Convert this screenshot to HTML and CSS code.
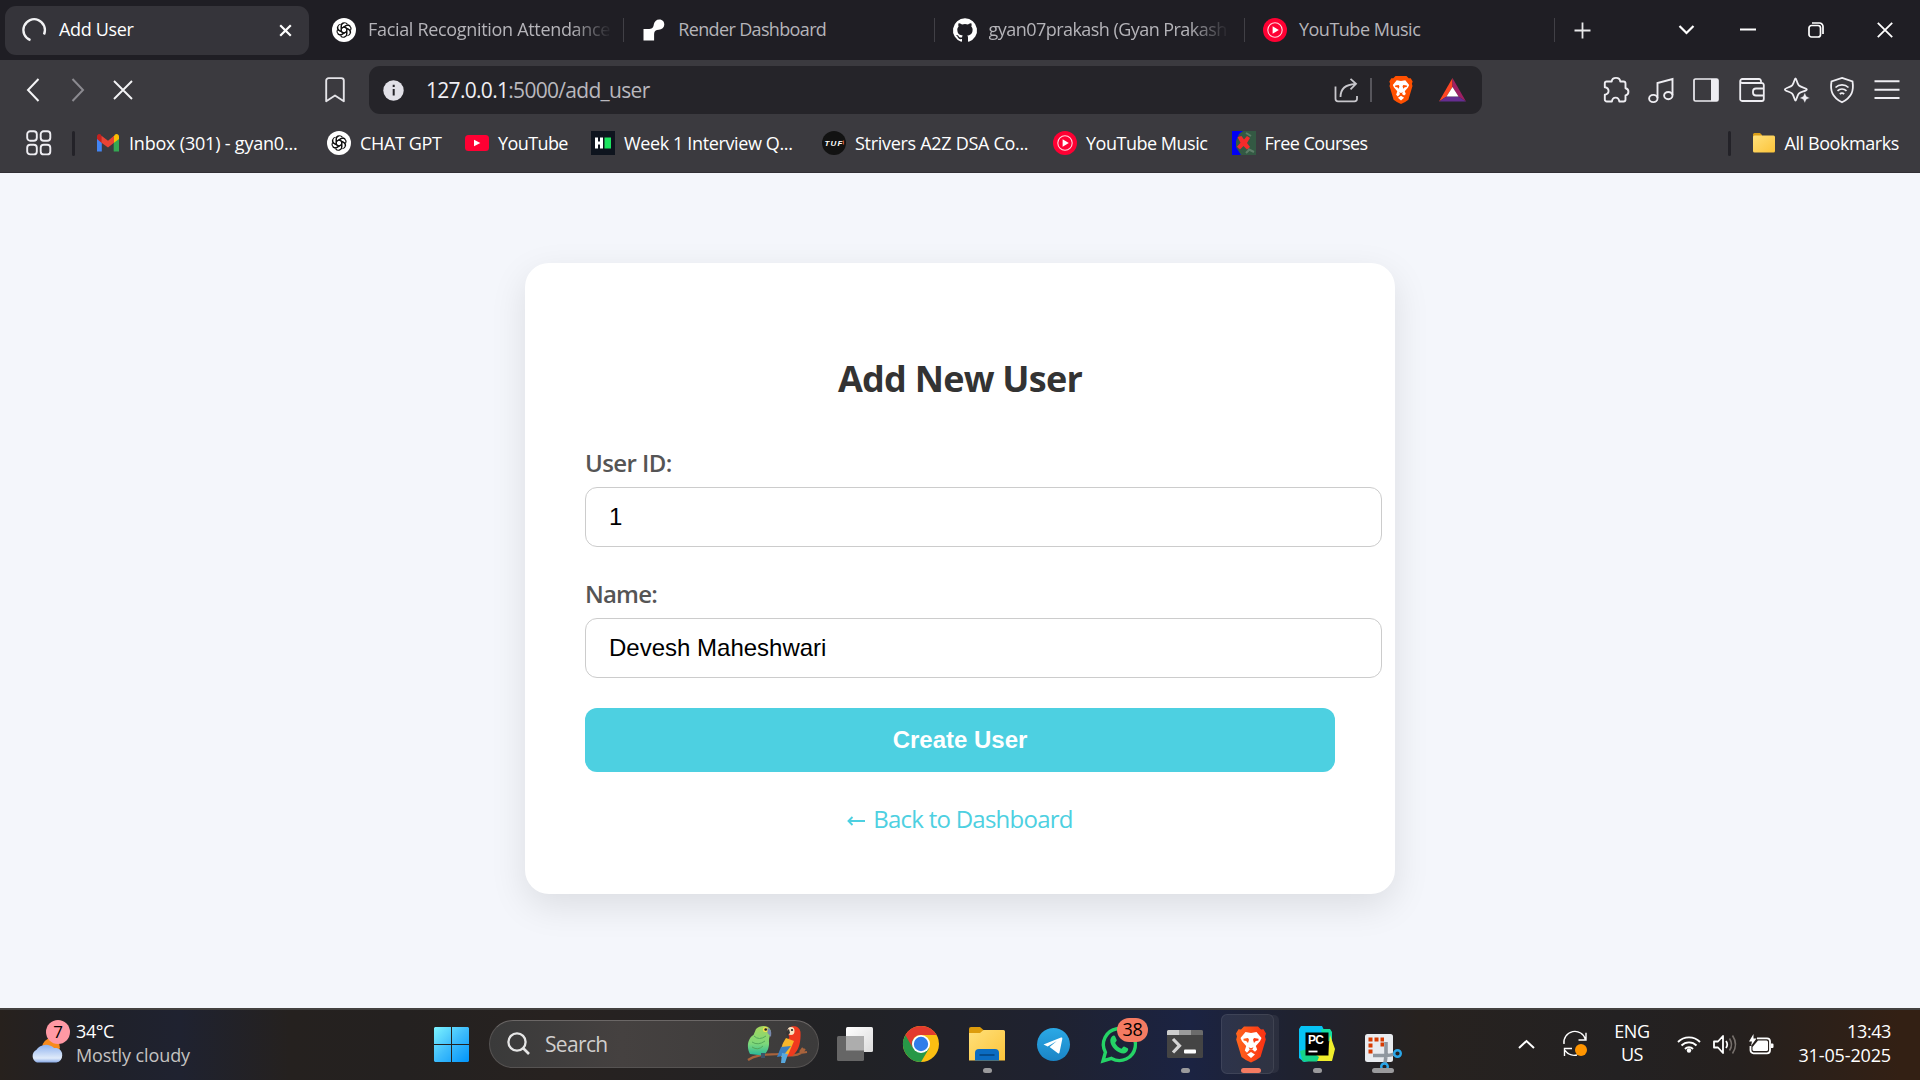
FILE: index.html
```html
<!DOCTYPE html>
<html lang="en">
<head>
<meta charset="utf-8">
<title>Add User</title>
<link rel="stylesheet" href="styles.css">
</head>
<body>
<svg class="defs" aria-hidden="true">
  <defs>
    <linearGradient id="win" x1="0" y1="0" x2="1" y2="1"><stop offset="0" stop-color="#7df4ff"/><stop offset=".5" stop-color="#3ebcfb"/><stop offset="1" stop-color="#0094fb"/></linearGradient>
    <linearGradient id="folder" x1="0" y1="0" x2="1" y2="1"><stop offset="0" stop-color="#ffe07a"/><stop offset="1" stop-color="#fcc43a"/></linearGradient>
    <linearGradient id="cloud" x1="0" y1="0" x2="0" y2="1"><stop offset="0" stop-color="#8fb2ee"/><stop offset=".75" stop-color="#e0ebfa"/><stop offset="1" stop-color="#88a9e6"/></linearGradient>
    <linearGradient id="tg" x1="0" y1="0" x2="0" y2="1"><stop offset="0" stop-color="#2ba9e6"/><stop offset="1" stop-color="#1a84c5"/></linearGradient>
    <linearGradient id="brave" x1="0" y1="0" x2="1" y2="0"><stop offset="0" stop-color="#ff5a0a"/><stop offset="1" stop-color="#fb1f00"/></linearGradient>
    <linearGradient id="green" x1="0" y1="0" x2="0" y2="1"><stop offset="0" stop-color="#a5d65c"/><stop offset=".6" stop-color="#7ed87a"/><stop offset="1" stop-color="#27b79a"/></linearGradient>
    <symbol id="gpt" viewBox="0 0 24 24">
      <circle cx="12" cy="12" r="12" fill="#fff"/>
      <g fill="none" stroke="#111" stroke-width="1.15">
        <path id="petal" d="M9.3 13.4V8.1a3.3 3.3 0 0 1 6-1.9M9.3 10.4l4.8-2.8a3.3 3.3 0 0 1 3.9.4"/>
        <use href="#petal" transform="rotate(60 12 12)"/><use href="#petal" transform="rotate(120 12 12)"/><use href="#petal" transform="rotate(180 12 12)"/><use href="#petal" transform="rotate(240 12 12)"/><use href="#petal" transform="rotate(300 12 12)"/>
      </g>
    </symbol>
    <symbol id="ytm" viewBox="0 0 24 24"><circle cx="12" cy="12" r="12" fill="#ff0033"/><circle cx="12" cy="12" r="7.2" fill="none" stroke="#fff" stroke-opacity=".85" stroke-width="1.1"/><path d="M9.6 8.3v7.4l6.2-3.7z" fill="#fff"/></symbol>
    <symbol id="lion" viewBox="0 0 30 36">
      <path d="M8 0h14l3 3 2.500-.2L30 7l-1 3 .8 3-5.300 17.500Q19.500 34.500 15 36q-4.500-1.500-9.500-5.500L.2 13 1 10 0 7l2.500-4.200L5 3z"/>
      <path fill="#fff" d="M9.500 5.500 15 6.500l5.500-1 5 6-1.500 3.200-4.200 4.800 1.400 3.500-2.200 2.200-2.800-2.200h-2.400L11 26.200 8.800 24l1.400-4.500L6 14.700 4.500 11.500zM15 25.500l4 2.500-4 3.500-4-3.500z"/>
      <path d="M7.500 12.200 12 11.600l1 1.700-1 3.200-1.800-1.900-2.700-.5zM22.500 12.200 18 11.600l-1 1.700 1 3.200 1.800-1.900 2.700-.5zM12.500 20.800l2.500 1 2.500-1-1.300 2.200h-2.400z"/>
    </symbol>
  </defs>
</svg>

<header class="browser">
  <div class="tabstrip">
    <div class="tab tab-active">
      <svg class="ic24 spinner" viewBox="0 0 24 24"><path d="M8.500 22.200A10.800 10.800 0 1 1 22 16.500" fill="none" stroke="#f2f2f4" stroke-width="2.300"/></svg>
      <span class="tab-title t-add">Add User</span>
      <svg class="close" width="13" height="13" viewBox="0 0 13 13"><path d="M1.200 1.200l10.600 10.600M11.800 1.200 1.200 11.800" stroke="#fff" stroke-width="2.200"/></svg>
    </div>
    <div class="tab"><svg class="ic24"><use href="#gpt"/></svg><span class="tab-title fade t-facial">Facial Recognition Attendance</span></div>
    <div class="tab">
      <svg class="ic24" viewBox="0 0 24 24"><path d="M1.500 11h5.800c3.600 0 4.200-2.200 4.500-4.400A5.500 5.500 0 0 1 17.400 1.500c3.200 0 5 2.400 4.900 5.200-.2 3-2.400 4.900-5.500 5-2.700 0-4.700 1.200-4.700 4.300v6.500H1.500z" fill="#fff"/></svg>
      <span class="tab-title t-render">Render Dashboard</span>
    </div>
    <div class="tab">
      <svg class="ic24" viewBox="0 0 24 24"><path fill="#fff" d="M12 .3a12 12 0 0 0-3.800 23.400c.6.100.8-.3.800-.6v-2c-3.300.7-4-1.600-4-1.600-.6-1.400-1.400-1.800-1.400-1.800-1-.7.100-.7.100-.7 1.200 0 1.900 1.200 1.900 1.200 1 1.800 2.800 1.300 3.500 1 0-.8.400-1.300.7-1.600-2.700-.3-5.500-1.300-5.500-6 0-1.200.5-2.300 1.300-3.100-.2-.4-.6-1.600 0-3.200 0 0 1-.3 3.400 1.200a11.500 11.500 0 0 1 6 0c2.300-1.500 3.300-1.200 3.300-1.200.6 1.600.2 2.800 0 3.200.9.800 1.300 1.900 1.300 3.200 0 4.600-2.800 5.600-5.500 5.900.5.400.9 1 .9 2.200v3.300c0 .3.100.7.800.6A12 12 0 0 0 12 .3"/></svg>
      <span class="tab-title fade t-gyan">gyan07prakash (Gyan Prakash</span>
    </div>
    <div class="tab"><svg class="ic24"><use href="#ytm"/></svg><span class="tab-title t-music">YouTube Music</span></div>
    <svg class="newtab" width="17" height="17" viewBox="0 0 17 17"><path d="M8.500.5v16M.5 8.500h16" stroke="#e8e8ea" stroke-width="1.800"/></svg>
    <div class="winctl">
      <svg class="tabsearch" width="17" height="12" viewBox="0 0 17 12"><path d="M1.500 2l7 7 7-7" fill="none" stroke="#fff" stroke-width="2.200"/></svg>
      <svg width="16" height="4" viewBox="0 0 16 4"><path d="M0 1.500h16" stroke="#fff" stroke-width="2"/></svg>
      <svg width="16" height="16" viewBox="0 0 16 16"><rect x="1" y="3.500" width="11.500" height="11.500" rx="2.500" fill="none" stroke="#fff" stroke-width="1.700"/><path d="M4 1h7.500A3.500 3.500 0 0 1 15 4.500V12" fill="none" stroke="#fff" stroke-width="1.700"/></svg>
      <svg width="16" height="16" viewBox="0 0 16 16"><path d="M.8.8l14.400 14.400M15.200.8.8 15.200" stroke="#fff" stroke-width="1.800"/></svg>
    </div>
  </div>

  <div class="toolbar">
    <svg class="back" width="14" height="24" viewBox="0 0 14 24"><path d="M12.500 1 2 12l10.500 11" fill="none" stroke="#f4f4f6" stroke-width="2"/></svg>
    <svg class="fwd" width="14" height="24" viewBox="0 0 14 24"><path d="M1.500 1 12 12 1.500 23" fill="none" stroke="#8b8a90" stroke-width="2"/></svg>
    <svg class="stop" width="20" height="20" viewBox="0 0 20 20"><path d="M1 1l18 18M19 1 1 19" stroke="#f4f4f6" stroke-width="1.900"/></svg>
    <svg class="mark" width="20" height="26" viewBox="0 0 20 26"><path d="M1.200 24.300V3.600a2.500 2.500 0 0 1 2.500-2.500h12.600a2.500 2.500 0 0 1 2.500 2.500v20.700L10 18.500z" fill="none" stroke="#e4e3e8" stroke-width="1.900" stroke-linejoin="round"/></svg>
    <div class="urlbar">
      <svg class="info" width="21" height="21" viewBox="0 0 21 21"><circle cx="10.500" cy="10.500" r="10.200" fill="#e2e1e8"/><path d="M10.700 9v6.500M10.700 4.800v2.300" stroke="#252429" stroke-width="2"/></svg>
      <span class="url">127.0.0.1<span class="dim">:5000/add_user</span></span>
      <svg class="share" width="25" height="25" viewBox="0 0 25 25"><path d="M1.500 8.500v12.300a2.500 2.500 0 0 0 2.500 2.500h16.500a2.500 2.500 0 0 0 2.500-2.500V18M6.500 19c0-7.500 4.500-12.500 15-13M16.500.9 22 5.900l-5.500 5.500" fill="none" stroke="#c8c7cc" stroke-width="1.800"/></svg>
      <i class="urlsep"></i>
      <svg class="shield" width="24" height="28" fill="#ff5000"><use href="#lion"/></svg>
      <svg class="bat" width="27" height="24" viewBox="0 0 27 24"><path d="M13.500 0v9L7.500 18.500 0 23.500z" fill="#ff4724"/><path d="M13.500 0 27 23.500l-7.500-5-6-9.500z" fill="#9e1f63"/><path d="M0 23.500l7.500-5h12l7.500 5z" fill="#662d91"/><path d="M13.500 9l6 9.500h-12z" fill="#fff"/></svg>
    </div>
    <div class="tools">
      <svg viewBox="0 0 26 26"><path d="M3.500 4.500h5.200c.5-4.800 8.100-4.800 8.600 0h3.200a2 2 0 0 1 2 2v4.700c3.900.8 3.900 6.400 0 7.200v4.100a2 2 0 0 1-2 2h-4.200c-.6-5.200-6.800-5.200-7.400 0H3.800a2 2 0 0 1-2-2v-4.800c5-.8 5-6.600 0-7.400V6.200a1.700 1.700 0 0 1 1.700-1.700z" fill="none" stroke="#eeedf2" stroke-width="1.900" stroke-linejoin="round"/></svg>
      <svg viewBox="0 0 26 26"><path d="M9.500 21V6l15-4v16" fill="none" stroke="#eeedf2" stroke-width="1.900"/><ellipse cx="5.300" cy="21.500" rx="4.200" ry="3.600" fill="none" stroke="#eeedf2" stroke-width="1.900"/><ellipse cx="20.300" cy="18.600" rx="4.200" ry="3.600" fill="none" stroke="#eeedf2" stroke-width="1.900"/></svg>
      <svg viewBox="0 0 26 26"><rect x="1" y="2" width="24" height="22" rx="1.500" fill="none" stroke="#eeedf2" stroke-width="1.700"/><path d="M18 2h7v22h-7z" fill="#eeedf2"/></svg>
      <svg viewBox="0 0 26 26"><path d="M22 6V4a2 2 0 0 0-2-2H3.500A2.200 2.200 0 0 0 1.200 4.200v17.300A2 2 0 0 0 3.200 24h19.600a2 2 0 0 0 2-2V8a2 2 0 0 0-2-2H3.500A2 2 0 0 1 1.300 4M25 11.500h-8a3 3 0 0 0-3 3v1a3 3 0 0 0 3 3h8" fill="none" stroke="#eeedf2" stroke-width="1.800"/></svg>
      <svg viewBox="0 0 26 26"><path d="M11.500 1.500c1 0 1.500 5 3.300 6.900 1.900 2 8 2.500 8 4.100s-6.100 2.100-8 4.100c-1.800 1.900-2.300 7-3.300 7s-1.500-5.100-3.300-7C6.300 14.600.9 14.100.9 12.500s5.400-2.100 7.300-4.100c1.800-1.900 2.300-6.900 3.300-6.900z" fill="none" stroke="#eeedf2" stroke-width="1.800"/><path d="M20.800 15.500l1.600 3.800 3.400 1.600-3.400 1.600-1.600 3.500-1.600-3.500-3.600-1.600 3.600-1.600z" fill="#eeedf2" stroke="#3b3a3f" stroke-width=".4"/></svg>
      <svg viewBox="0 0 26 26"><path d="M13 .9 23.500 4.500c1.500 9-.5 15.500-10.500 20.800C3 20 1 13.500 2.500 4.500z" fill="none" stroke="#eeedf2" stroke-width="1.800"/><path d="M6.500 10.500a9.500 9.500 0 0 1 13 0M8.500 13.800a6.500 6.500 0 0 1 9 0M10.800 17a3.300 3.300 0 0 1 4.400 0" fill="none" stroke="#eeedf2" stroke-width="1.700"/></svg>
      <svg viewBox="0 0 26 26"><path d="M.5 4.200h25M.5 12.700h25M.5 21h25" stroke="#eeedf2" stroke-width="2"/></svg>
    </div>
  </div>

  <div class="bookmarks">
    <svg class="apps" width="26" height="26" viewBox="0 0 26 26"><g fill="none" stroke="#eeedf2" stroke-width="1.900"><rect x="1.200" y="1.200" width="9.600" height="9.600" rx="3"/><rect x="14.700" y="1.200" width="9.600" height="9.600" rx="3"/><rect x="1.200" y="14.800" width="9.600" height="9.600" rx="3"/><rect x="14.700" y="14.800" width="9.600" height="9.600" rx="3"/></g></svg>
    <i class="bsep"></i>
    <nav class="bm-list">
      <span class="bm"><svg class="ic24" viewBox="0 0 24 24"><path d="M1 5.500v15h4.800v-9z" fill="#4285f4"/><path d="M17.700 11.500v9H23v-15z" fill="#34a853"/><path d="M17.700 5.500v6.500L23 8V5.500c0-2.500-2.500-3.200-4-2z" fill="#fbbc04"/><path d="M5.800 5.500v6.500L1 8V5.500c0-2.500 2.300-3.200 3.800-2z" fill="#c5221f"/><path d="M5.500 4.800 12 9.700l6-4.900v7L12 16.500l-6.500-4.800z" fill="#ea4335"/></svg><span class="b-inbox">Inbox (301) - gyan0...</span></span>
      <span class="bm"><svg class="ic24"><use href="#gpt"/></svg><span class="b-gpt">CHAT GPT</span></span>
      <span class="bm"><svg class="ic24" viewBox="0 0 24 24"><rect y="4" width="24" height="16" rx="3.500" fill="#ff0033"/><path d="M9 8.800v6.400l6.300-3.200z" fill="#fff"/></svg><span class="b-yt">YouTube</span></span>
      <span class="bm"><svg class="ic24" viewBox="0 0 24 24"><rect width="24" height="24" fill="#0e141e"/><path d="M4 6.500h3v4h2v-4h3v11H9v-4H7v4H4z" fill="#fff"/><path d="M13.500 6.500h6.500v11h-6.500z" fill="#1ce45f"/></svg><span class="b-week">Week 1 Interview Q...</span></span>
      <span class="bm"><svg class="ic24" viewBox="0 0 24 24"><circle cx="12" cy="12" r="12" fill="#121212"/><text x="2.500" y="14.800" class="tuf" textLength="18">TUF</text><path d="M21.500 9.500v4" stroke="#c8502c" stroke-width="1.200"/></svg><span class="b-striv">Strivers A2Z DSA Co...</span></span>
      <span class="bm"><svg class="ic24"><use href="#ytm"/></svg><span class="t-music">YouTube Music</span></span>
      <span class="bm"><svg class="ic24" viewBox="0 0 24 24"><rect width="24" height="24" fill="#335943"/><path d="M0 0h11L7 3 4 10v6l5 8H0z" fill="#0000f5"/><path d="M14 2l5 3M16 18l6 3M14 22l3-3" stroke="#5d7d68" stroke-width="2"/><path d="M5.500 6l4-1 2.500 3.500L15 5l3 2-3 5 3 4-3 2.500-3.500-3.500L8 18.500l-3-2.800 3.500-4z" fill="#f52b2b"/></svg><span class="b-free">Free Courses</span></span>
    </nav>
    <i class="bsep bsep-r"></i>
    <span class="bm bm-all"><svg class="ic24" viewBox="0 0 24 24"><path d="M1 3.500a1.500 1.500 0 0 1 1.500-1.500h5.500l2 2v6H1z" fill="#d99d18"/><rect x="1" y="4.500" width="22" height="17" rx="1.500" fill="url(#folder)"/></svg><span class="b-all">All Bookmarks</span></span>
  </div>
</header>

<main class="page">
  <form class="card">
    <h2>Add New User</h2>
    <label class="l-id" for="uid">User ID:</label>
    <input id="uid" type="text" value="1">
    <label class="l-name" for="name">Name:</label>
    <input id="name" type="text" value="Devesh Maheshwari">
    <button type="button">Create User</button>
    <a class="link" href="#"><svg width="18" height="10" viewBox="0 0 18 10"><path d="M18 5H1.500M5.500 1 1.500 5l4 4" fill="none" stroke="#4dd0e1" stroke-width="1.900"/></svg><span>Back to Dashboard</span></a>
  </form>
</main>

<footer class="taskbar">
  <div class="weather">
    <div class="w-icon">
      <svg width="42" height="44" viewBox="0 0 42 44"><circle cx="25" cy="25" r="10" fill="#f78a1c"/><path d="M9 43a8 8 0 0 1-.5-14.500 12 10 0 0 1 20-2 10 10 0 0 1 3 0A8.500 8.500 0 0 1 31 43z" transform="translate(0 -.5)" fill="url(#cloud)"/></svg>
      <span class="badge badge-pink">7</span>
    </div>
    <div class="w-text"><span class="w-temp">34°C</span><span class="w-desc">Mostly cloudy</span></div>
  </div>
  <svg class="start" width="35" height="35" viewBox="0 0 35 35"><path d="M1 0h16v17H0V1zM18 0h16l1 1v16H18zM0 18h17v17H1l-1-1zM18 18h17v16l-1 1H18z" fill="url(#win)"/></svg>
  <div class="search">
    <svg width="24" height="24" viewBox="0 0 24 24"><circle cx="10" cy="10" r="8.600" fill="none" stroke="#e6e6e6" stroke-width="2.300"/><path d="M16 16l6 6" stroke="#e6e6e6" stroke-width="2.600"/></svg>
    <span class="s-text">Search</span>
    <svg class="birds" width="61" height="38" viewBox="0 0 61 38">
      <path d="M1 35c8-6 20-5 31-6 9 1 16 3 22-1l4-4M53 28l7-1M53 27l3-4" fill="none" stroke="#a8633c" stroke-width="2.200"/>
      <path d="M9 4C13-.5 22 0 23.500 5c.5 5-2 8-1.500 12 .4 6-2 11-6 13.500L3 29C-1 22 1 13 6.500 10z" fill="url(#green)"/>
      <path d="M7 11q5 5 12 0M5 17q6 4 13-1M5 22q6 4 11-1" stroke="#55a85b" fill="none" stroke-width="1"/>
      <circle cx="18.500" cy="4.500" r="2.600" fill="#f0e04c"/><circle cx="18.700" cy="4.500" r="1.300" fill="#222"/>
      <path d="M20.500 3q5 1 3.500 9l-3.500-4z" fill="#7889ad"/><path d="M14 28h4v5h-4z" fill="#3d5468"/>
      <path d="M40 7c1-7 12-8 13.500 0 .5 9-1 18-8 24l-8 1c-3-11 2-14 5-20z" fill="#f03a1e"/>
      <path d="M39 13l8 3-6 14-7 2c-.5-9 1-13 5-19z" fill="#f8b62a"/>
      <path d="M34 22l10-1-8 10-6 1z" fill="#3c7fc0"/><path d="M35 28l6 1-3 9h-4z" fill="#58a8dd"/>
      <ellipse cx="44" cy="6" rx="3.500" ry="4" fill="#f7e3c0"/><circle cx="45" cy="5" r="1.100" fill="#222"/><path d="M42 4q-4 2-2 7l3-3z" fill="#343434"/>
    </svg>
  </div>
  <div class="apps-row">
    <div class="app"><svg width="36" height="34" viewBox="0 0 36 34"><defs><linearGradient id="tv" x1="0" y1="0" x2="1" y2="1"><stop offset="0" stop-color="#fff"/><stop offset="1" stop-color="#dcdcdc"/></linearGradient></defs><rect x="9" width="27" height="25" rx="1.500" fill="url(#tv)"/><rect y="9" width="27" height="25" rx="1.500" fill="#666"/><path d="M9 9h18v14.500H9z" fill="#adadad"/></svg></div>
    <div class="app"><svg width="36" height="36" viewBox="0 0 36 36"><circle cx="18" cy="18" r="18" fill="#fbbf12"/><path d="M18 18 2.400 9A18 18 0 0 0 18 36l8-13.500z" fill="#279847"/><path d="M2.400 9a18 18 0 0 1 31.200 0H18a9 9 0 0 0-8 13.500z" fill="#e33b2e"/><circle cx="18" cy="18" r="9" fill="#fff"/><circle cx="18" cy="18" r="7.200" fill="#2f7de9"/></svg></div>
    <div class="app dot"><svg width="36" height="34" viewBox="0 0 36 34"><path d="M0 2a2 2 0 0 1 2-2h9l3.500 3v6H0z" fill="#dd9c0c"/><path d="M0 6h11l3.500-3H34.500a1.500 1.500 0 0 1 1.500 1.500V33.500H0z" fill="url(#folder)"/><path d="M6 33.500V26a4 4 0 0 1 4-4h16a4 4 0 0 1 4 4v7.500z" fill="#0b6cc2"/><path d="M10.500 28h15" stroke="#05457f" stroke-width="1.600"/></svg></div>
    <div class="app"><svg width="33" height="33" viewBox="0 0 33 33"><circle cx="16.500" cy="16.500" r="16.500" fill="url(#tg)"/><path d="M6.500 16.500 24 9.600c.9-.3 1.500.2 1.300 1.300L22.500 24.500c-.2 1-.8 1.200-1.600.7l-8.300-6.100 7.200-6.200-9.100 5.500z" fill="#fff"/></svg></div>
    <div class="app"><svg width="37" height="37" viewBox="0 0 37 37"><path d="M2 35l2.400-8.800A16 16 0 1 1 10.500 32.400z" fill="none" stroke="#25d366" stroke-width="3.400"/><path d="M11 10.500c1.500-1.500 2.800-1 3.300.2l1.400 3.400c.3.900-1.200 2.300-1.500 2.900 1.200 2.600 3.300 4.600 6.200 5.700.8-.3 1.900-2.600 2.800-2.200l3.500 1.800c1.600 1-.8 5.200-4 5.200C16.500 27.500 9 20.500 9.300 14.500c.1-1.700.8-3.100 1.700-4z" fill="#25d366"/></svg><span class="badge badge-coral">38</span></div>
    <div class="app dot"><svg width="36" height="28" viewBox="0 0 36 28"><rect width="36" height="28" rx="1.500" fill="#444"/><path d="M0 5V1.500A1.500 1.500 0 0 1 1.500 0H12v5z" fill="#cdcdcd"/><path d="M12 0h12v5H12z" fill="#9b9b9b"/><path d="M24 0h10.500A1.500 1.500 0 0 1 36 1.500V5H24z" fill="#6b6b6b"/><path d="M6 9l6.500 6.700L6 22.500" fill="none" stroke="#d4d4d4" stroke-width="3.200"/><rect x="17" y="19.500" width="12" height="4" rx="1" fill="#fff"/></svg></div>
    <div class="app app-active"><svg width="30" height="37" fill="url(#brave)"><use href="#lion"/></svg></div>
    <div class="app dot"><svg width="36" height="36" viewBox="0 0 36 36"><path d="M0 3l2-3h21l2 4-1 28-19 4-5-4z" fill="#06c3f5"/><path d="M22 3h9l2 3v8l-9 3z" fill="#14dfa4"/><path d="M31 9l5 14-3 12H9l-4-5 24-3z" fill="#f0ee2c"/><path d="M1 25l7-2 12 8-2 4.500H3.500z" fill="#16d389"/><rect x="6.500" y="6.500" width="23" height="23" fill="#000"/><text x="9" y="18.300" class="pc" textLength="16">PC</text><path d="M9.500 25.500h9" stroke="#fff" stroke-width="1.800"/></svg></div>
    <div class="app wide"><svg class="snip" width="37" height="37" viewBox="0 0 37 37"><rect width="28" height="28" rx="2.500" fill="#e9ecf0"/><path d="M3.500 3.500h4v4h-4zM9.500 3.500h4v4h-4zM15.500 3.500h3.500v4h-3.500zM3.500 9.500h4v4h-4zM3.500 15.500h4v4h-4zM15.500 8.500H19v4h-3.500z" fill="#d83b01"/><path d="M8 21.500h12q6 0 9-1.500M21 8v14l-1 7" stroke="#8f979f" stroke-width="3.600" fill="none"/><circle cx="32.500" cy="19.500" r="3.300" fill="none" stroke="#2aa7ea" stroke-width="2.400"/><circle cx="19.500" cy="32.800" r="3.300" fill="none" stroke="#2aa7ea" stroke-width="2.400"/></svg></div>
  </div>
  <div class="tray">
    <svg class="up" width="17" height="10" viewBox="0 0 17 10"><path d="M1 9l7.500-7L16 9" fill="none" stroke="#fff" stroke-width="2"/></svg>
    <svg class="sync" width="25" height="25" viewBox="0 0 25 25"><path d="M1 12A11 11 0 0 1 22.500 7.500M23 .8V8h-7.500M1.500 24v-7.500h7.500M2 18.500c3 4 8 5.500 12 4.500" fill="none" stroke="#fff" stroke-width="1.400"/><circle cx="18" cy="18" r="6" fill="#ff9500"/></svg>
    <div class="lang"><span>ENG</span><span>US</span></div>
    <svg class="wifi" width="24" height="18" viewBox="0 0 24 18"><path d="M1 7a15.500 15.500 0 0 1 22 0M4.500 10.500a10.500 10.500 0 0 1 15 0M8 14a5.500 5.500 0 0 1 8 0" fill="none" stroke="#fff" stroke-width="1.900"/><circle cx="12" cy="15.500" r="2.200" fill="#fff"/></svg>
    <svg class="vol" width="24" height="21" viewBox="0 0 24 21"><path d="M1 7.500h4l5-5.500v17l-5-5.500H1z" fill="none" stroke="#fff" stroke-width="1.800" stroke-linejoin="round"/><path d="M13 7q2.500 3.500 0 7" fill="none" stroke="#fff" stroke-width="1.700"/><path d="M16.500 4.500q4 6 0 12M19.500 1.500q6 9 0 18" fill="none" stroke="#77706c" stroke-width="1.600"/></svg>
    <svg class="batt" width="25" height="21" viewBox="0 0 25 21"><path d="M8 4.300h10a3 3 0 0 1 3 3v9a3 3 0 0 1-3 3H4.500a3 3 0 0 1-3-3V12" fill="none" stroke="#fff" stroke-width="1.800"/><path d="M9 6.500h8.500a1.500 1.500 0 0 1 1.500 1.500v7.500a1.500 1.500 0 0 1-1.500 1.500H5a1.500 1.500 0 0 1-1.500-1.500V13z" fill="#fff"/><path d="M22 9.500h1.500a1 1 0 0 1 1 1v2.500a1 1 0 0 1-1 1H22zM4.500 0 0 7.500h3L2 12l5.500-7.500h-3z" fill="#fff"/></svg>
    <div class="clock"><span class="t-time">13:43</span><span class="t-date">31-05-2025</span></div>
  </div>
</footer>
</body>
</html>
```
FILE: styles.css
```css
* { box-sizing: border-box; }
body {
  margin: 0;
  width: 1920px;
  height: 1080px;
  overflow: hidden;
  display: flex;
  flex-direction: column;
  font-family: "Open Sans", "Noto Sans", sans-serif;
  font-size: 18px;
  white-space: nowrap;
}
svg { display: block; flex: none; overflow: visible; }
.defs { width: 0; height: 0; position: absolute; }
.ic24 { width: 24px; height: 24px; }

/* browser chrome */
.browser { height: 173px; background: #3b3a3f; border-bottom: 1px solid #312f34; color: #fff; }
.tabstrip { height: 60px; background: #1f1e24; display: flex; align-items: center; padding-left: 5px; }
.tab { width: 310.300px; height: 24px; padding-left: 18px; display: flex; align-items: center; gap: 12px; color: #b5b4b9; border-right: 1px solid #414046; }
.tab-active { width: 304px; height: 49px; margin-right: 5px; padding-left: 17px; border: 0; border-radius: 11px; background: #35343a; color: #fff; gap: 13px; }
.tab-title { line-height: 24px; padding-bottom: 2px; }
.fade { -webkit-mask-image: linear-gradient(to right, #000 84%, rgba(0, 0, 0, .1) 99%); mask-image: linear-gradient(to right, #000 84%, rgba(0, 0, 0, .1) 99%); }
.t-add { letter-spacing: -.35px; }
.t-facial { letter-spacing: -.32px; }
.t-render { letter-spacing: -.65px; }
.t-gyan { letter-spacing: -.55px; }
.t-music { letter-spacing: -.48px; }
.close { margin-left: auto; margin-right: 17px; }
.newtab { margin-left: 19px; }
.winctl { margin-left: auto; width: 275px; display: grid; grid-template-columns: repeat(4, 68.500px); align-items: center; justify-items: center; }
.tabsearch { margin-left: 15px; }

.toolbar { height: 60px; display: flex; align-items: center; }
.back { margin-left: 26px; }
.fwd { margin-left: 31px; }
.stop { margin-left: 28px; }
.mark { margin-left: 192px; }
.urlbar { margin-left: 24px; width: 1113px; height: 48px; border-radius: 11px; background: #252429; display: flex; align-items: center; }
.info { margin-left: 14px; }
.url { margin-left: 22px; font-size: 21px; letter-spacing: -.7px; color: #f0eff4; }
.dim { color: #b9b8be; }
.share { margin-left: auto; }
.urlsep { width: 2px; height: 24px; background: #57565c; margin: 0 17px 0 11px; }
.bat { margin: 0 16px 0 26px; }
.tools { margin-left: 111.500px; display: grid; grid-template-columns: repeat(7, 45.200px); justify-items: center; }
.tools svg { width: 26px; height: 26px; }

.bookmarks { height: 46px; display: flex; align-items: center; }
.apps { margin-left: 26px; }
.bsep { width: 3px; height: 25px; border-radius: 2px; background: #232228; margin-left: 20px; }
.bsep-r { margin-left: auto; }
.bm-list { margin-left: 21px; display: grid; grid-template-columns: 231px 138px 126px 231px 231px 178.600px 160px; }
.bm { display: flex; align-items: center; gap: 9px; }
.bm > span { padding-bottom: 1px; }
.bm-all { margin-left: 21px; margin-right: 21px; }
.b-inbox { letter-spacing: -.2px; }
.b-gpt { letter-spacing: -.35px; }
.b-yt { letter-spacing: -.6px; }
.b-week { letter-spacing: -.37px; }
.b-striv { letter-spacing: -.3px; }
.b-free { letter-spacing: -.53px; }
.b-all { letter-spacing: -.42px; }
.tuf { font: italic 700 8px "Liberation Sans", sans-serif; fill: #fff; }

/* page */
.page { height: 835px; background: #f4f6fb; padding-top: 90px; }
.card { width: 870px; height: 631px; margin: 0 auto; padding: 92px 60px 59px; border-radius: 24px; background: #fff; box-shadow: 0 12px 36px rgba(0, 0, 0, .1); display: flex; flex-direction: column; align-items: flex-start; }
h2 { margin: 0 auto 44px; font-size: 36px; line-height: 48px; font-weight: 700; letter-spacing: -.77px; color: #333; }
label { height: 32px; line-height: 32px; margin-bottom: 8px; font-size: 24px; font-weight: 600; color: #555; }
.l-id { letter-spacing: -.6px; }
.l-name { letter-spacing: -.8px; }
input { width: 797px; height: 60px; flex: none; margin: 0 0 31px; padding: 0 23px; border: 1px solid #ccc; border-radius: 12px; background: #fff; font: 24px "Liberation Sans", Arial, sans-serif; color: #000; outline: 0; }
button { width: 750px; height: 64px; flex: none; margin-top: -1px; border: 0; border-radius: 12px; background: #4dd0e1; color: #fff; font: 700 24px "Liberation Sans", Arial, sans-serif; }
.link { margin: 31px auto 0; display: flex; align-items: center; gap: 8px; font-size: 24px; line-height: 32px; letter-spacing: -.75px; color: #4dd0e1; text-decoration: none; }
.link svg { margin-top: 3px; }

/* taskbar */
.taskbar { height: 72px; padding-bottom: 2px; display: flex; align-items: center; color: #fff; border-top: 2px solid #434140;
  background: linear-gradient(90deg, #27211d 0, #1f212a 110px, #1f2230 180px, #25211f 290px, #242120 400px, #272220 560px, #212225 850px, #1f2230 1050px, #1b2342 1190px, #1f2230 1290px, #27221f 1420px, #232122 1620px, #25201e 1740px, #332014 1900px); }
.weather { width: 405px; margin-left: 29px; display: flex; align-items: center; }
.w-icon { position: relative; width: 41px; }
.w-icon svg { width: 37px; height: 39px; }
.badge { position: absolute; color: #000; text-align: center; height: 24px; line-height: 23px; border-radius: 12px; font-size: 17px; }
.badge-pink { left: 17px; top: -5px; width: 24px; background: #ff99a4; }
.badge-coral { left: 31px; top: 4px; width: 31px; background: #f47b62; font-size: 18px; letter-spacing: -.4px; }
.w-text { margin-left: 6px; margin-top: -3px; display: flex; flex-direction: column; line-height: 24px; }
.w-temp { letter-spacing: -.4px; }
.w-desc { letter-spacing: -.1px; color: #c4c2c1; }
.search { margin-left: 20px; width: 330px; height: 48px; border-radius: 24px; border: 1px solid #565352; border-top-color: #6b6766; background: linear-gradient(90deg, #3a3a3a, #454140 40%, #3c3b3b); display: flex; align-items: center; padding: 0 10px 0 17px; font-size: 21px; letter-spacing: -.65px; color: #d0cecd; }
.s-text { margin-left: 14px; }
.birds { margin-left: auto; }
.apps-row { margin-left: 3px; display: grid; grid-template-columns: repeat(9, 66px); align-items: center; }
.app { position: relative; height: 60px; display: flex; align-items: center; justify-content: center; }
.dot::after, .wide::after, .app-active::after { content: ""; position: absolute; left: 29px; bottom: 1px; width: 9px; height: 5px; border-radius: 3px; background: #9a9a9c; }
.app-active::before { content: ""; position: absolute; left: 3px; top: 0; width: 53px; height: 60px; border-radius: 6px; background: rgba(255, 255, 255, .08); box-shadow: inset 0 0 0 1px rgba(255, 255, 255, .08), 6px 0 0 -1px rgba(255, 255, 255, .06); }
.app-active::after { left: 23px; width: 20px; background: #f47b62; }
.wide::after { left: 22px; width: 22px; }
.snip { margin-top: 16px; }
.pc { font: 700 12px "Liberation Sans", sans-serif; fill: #fff; }
.tray { margin-left: auto; margin-right: 29px; display: flex; align-items: center; }
.sync { margin-left: 28px; }
.lang { width: 46px; margin: -2px 0 0 21px; display: flex; flex-direction: column; align-items: center; line-height: 23px; letter-spacing: -.4px; }
.wifi { margin-left: 22px; }
.vol { margin-left: 12px; }
.batt { margin-left: 12px; }
.clock { width: 117px; margin-top: -3px; display: flex; flex-direction: column; align-items: flex-end; line-height: 24px; }
.t-time { letter-spacing: -.4px; }
.t-date { letter-spacing: -.14px; }
```
